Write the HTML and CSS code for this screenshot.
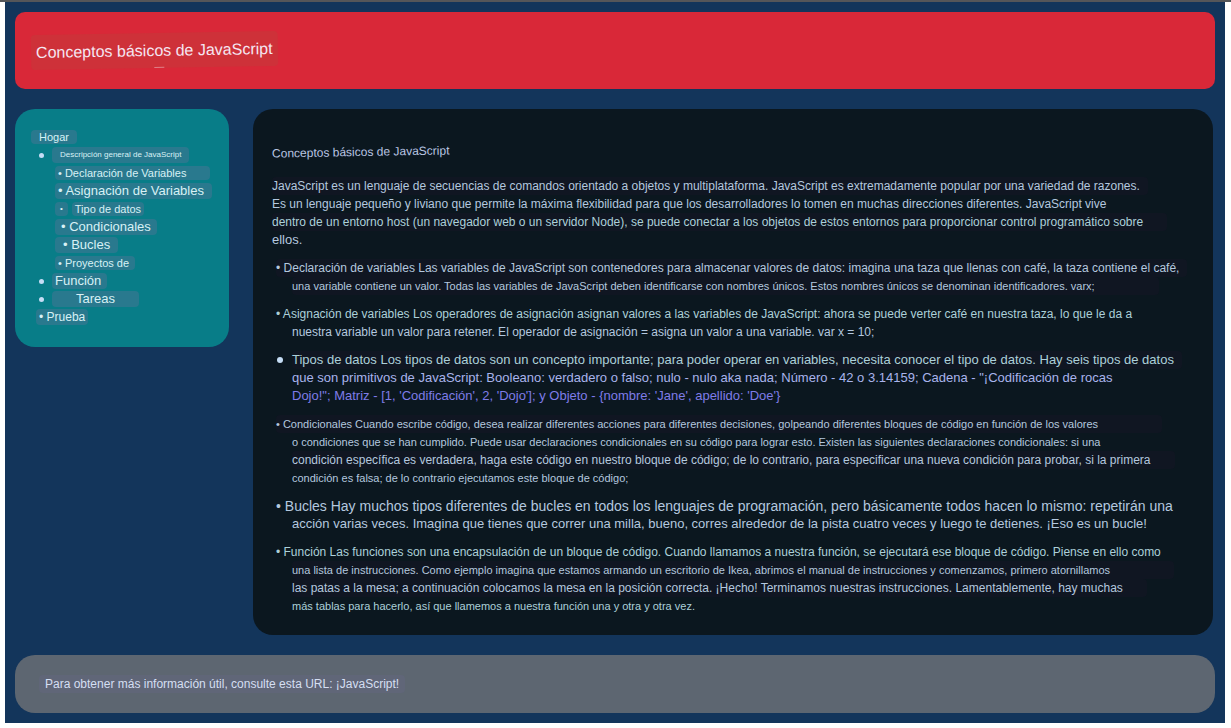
FILE: index.html
```html
<!DOCTYPE html>
<html lang="es">
<head>
<meta charset="utf-8">
<meta name="viewport" content="width=device-width, initial-scale=1">
<title>Conceptos básicos de JavaScript</title>
<link rel="stylesheet" href="styles.css">
</head>
<body>
<div class="page">
  <header class="banner"><h1 class="banner-title">Conceptos básicos de JavaScript</h1></header>
  <div class="columns">
    <nav class="menu" aria-label="Temas">
      <ul class="menu-list">
        <li class="row"><a href="#hogar" class="chip home">Hogar</a></li>
        <li class="row top"><span class="dot"></span><a href="#general" class="chip tall overview">Descripción general de JavaScript</a></li>
        <li>
          <ul class="submenu">
            <li class="row"><a href="#declaracion" class="chip small wide">• Declaración de Variables</a></li>
            <li class="row"><a href="#asignacion" class="chip tall large assign">• Asignación de Variables</a></li>
            <li class="row"><span class="chip mini">•</span><a href="#tipos" class="chip small types">Tipo de datos</a></li>
            <li class="row"><a href="#condicionales" class="chip tall large inset">• Condicionales</a></li>
            <li class="row"><a href="#bucles" class="chip tall large inset-wide">• Bucles</a></li>
            <li class="row"><a href="#proyectos" class="chip small projects">• Proyectos de</a></li>
          </ul>
        </li>
        <li class="row top"><span class="dot"></span><a href="#funcion" class="chip tall large function">Función</a></li>
        <li class="row top"><span class="dot"></span><a href="#tareas" class="chip tall large tasks">Tareas</a></li>
        <li class="row test"><a href="#prueba" class="chip tall medium">• Prueba</a></li>
      </ul>
    </nav>
    <main class="content">
      <h2 class="content-title" id="general">Conceptos básicos de JavaScript</h2>
      <p class="intro">
        <span class="line s12 mark">JavaScript es un lenguaje de secuencias de comandos orientado a objetos y multiplataforma. JavaScript es extremadamente popular por una variedad de razones.</span>
        <span class="line s12">Es un lenguaje pequeño y liviano que permite la máxima flexibilidad para que los desarrolladores lo tomen en muchas direcciones diferentes. JavaScript vive</span>
        <span class="line s12 mark mark-wide aqua">dentro de un entorno host (un navegador web o un servidor Node), se puede conectar a los objetos de estos entornos para proporcionar control programático sobre</span>
        <span class="line s13">ellos.</span>
      </p>
      <ul class="topics">
        <li id="declaracion">
          <span class="line first s12 mark">• Declaración de variables Las variables de JavaScript son contenedores para almacenar valores de datos: imagina una taza que llenas con café, la taza contiene el café,</span>
          <span class="line s11 mark mark-far">una variable contiene un valor. Todas las variables de JavaScript deben identificarse con nombres únicos. Estos nombres únicos se denominan identificadores. varx;</span>
        </li>
        <li id="asignacion">
          <span class="line first s12 aqua">• Asignación de variables Los operadores de asignación asignan valores a las variables de JavaScript: ahora se puede verter café en nuestra taza, lo que le da a</span>
          <span class="line s12">nuestra variable un valor para retener. El operador de asignación = asigna un valor a una variable. var x = 10;</span>
        </li>
        <li id="tipos" class="dotted">
          <span class="line s13 mark aqua">Tipos de datos Los tipos de datos son un concepto importante; para poder operar en variables, necesita conocer el tipo de datos. Hay seis tipos de datos</span>
          <span class="line s13 lilac">que son primitivos de JavaScript: Booleano: verdadero o falso; nulo - nulo aka nada; Número - 42 o 3.14159; Cadena - "¡Codificación de rocas</span>
          <span class="line s13 violet">Dojo!"; Matriz - [1, 'Codificación', 2, 'Dojo']; y Objeto - {nombre: 'Jane', apellido: 'Doe'}</span>
        </li>
        <li id="condicionales">
          <span class="line first s11 mark mark-far">• Condicionales Cuando escribe código, desea realizar diferentes acciones para diferentes decisiones, golpeando diferentes bloques de código en función de los valores</span>
          <span class="line s11">o condiciones que se han cumplido. Puede usar declaraciones condicionales en su código para lograr esto. Existen las siguientes declaraciones condicionales: si una</span>
          <span class="line s12 mark mark-wide">condición específica es verdadera, haga este código en nuestro bloque de código; de lo contrario, para especificar una nueva condición para probar, si la primera</span>
          <span class="line s11">condición es falsa; de lo contrario ejecutamos este bloque de código;</span>
        </li>
        <li id="bucles">
          <span class="line first s14">• Bucles Hay muchos tipos diferentes de bucles en todos los lenguajes de programación, pero básicamente todos hacen lo mismo: repetirán una</span>
          <span class="line s13">acción varias veces. Imagina que tienes que correr una milla, bueno, corres alrededor de la pista cuatro veces y luego te detienes. ¡Eso es un bucle!</span>
        </li>
        <li id="funcion">
          <span class="line first s12 aqua">• Función Las funciones son una encapsulación de un bloque de código. Cuando llamamos a nuestra función, se ejecutará ese bloque de código. Piense en ello como</span>
          <span class="line s11 mark mark-far">una lista de instrucciones. Como ejemplo imagina que estamos armando un escritorio de Ikea, abrimos el manual de instrucciones y comenzamos, primero atornillamos</span>
          <span class="line s12 mark mark-wide">las patas a la mesa; a continuación colocamos la mesa en la posición correcta. ¡Hecho! Terminamos nuestras instrucciones. Lamentablemente, hay muchas</span>
          <span class="line s11 aqua">más tablas para hacerlo, así que llamemos a nuestra función una y otra y otra vez.</span>
        </li>
      </ul>
    </main>
  </div>
  <footer class="footer"><p class="footer-text">Para obtener más información útil, consulte esta URL: ¡JavaScript!</p></footer>
</div>
</body>
</html>
```
FILE: styles.css
```css
* { box-sizing: border-box; }
body {
  margin: 0;
  border-top: 2px solid #555659;
  background: #fff;
  color: #b4c8df;
  font-family: "Liberation Sans", Arial, sans-serif;
  font-size: 12px;
  line-height: 18px;
}
h1, h2, p, ul { margin: 0; padding: 0; font-weight: normal; }
ul { list-style: none; }

.page {
  display: flex;
  flex-direction: column;
  gap: 20px;
  margin: 0 6px 5px 5px;
  padding: 10px;
  background: #13355b;
}

.banner {
  display: flex;
  padding: 21px 16px;
  border-radius: 10px;
  background: #d92838;
}
.banner-title {
  position: relative;
  padding: 0 5px;
  border-radius: 4px;
  background: #ce3139;
  color: #f5e6f2;
  font-size: 16px;
  line-height: 35px;
  transform: rotate(-1deg);
}
.banner-title::after {
  content: "";
  position: absolute;
  bottom: 0;
  left: 50%;
  width: 10px;
  height: 1px;
  background: #e08088;
}

.columns {
  display: grid;
  grid-template-columns: 214px minmax(0, 1fr);
  align-items: start;
  gap: 24px;
  margin-right: 2px;
}

.menu {
  padding: 19px 16px 21px;
  border-radius: 20px;
  background: #087d88;
}
.row {
  display: flex;
  align-items: center;
  height: 18px;
}
.submenu { padding-left: 24px; }
.top { padding-left: 8px; }
.test { padding-left: 5px; }
.dot {
  width: 5px;
  height: 5px;
  margin-right: 8px;
  border-radius: 50%;
  background: #c5ddf5;
}
.chip {
  padding: 0 3px;
  border-radius: 4px;
  background: #29798e;
  color: #d8f1f5;
  font-size: 11px;
  line-height: 14px;
  white-space: nowrap;
  text-decoration: none;
}
.tall { line-height: 16px; }
.medium { font-size: 12px; }
.large { font-size: 13px; }
.home { padding: 0 8px; }
.overview { padding: 0 8px; font-size: 8px; }
.wide { padding-right: 24px; }
.assign { padding-right: 8px; }
.mini { padding: 0 5px; margin-right: 4px; font-size: 8px; }
.inset { padding: 0 6px; }
.inset-wide { padding: 0 8px; }
.projects { padding-right: 6px; }
.function { padding-right: 6px; }
.tasks { padding: 0 24px; }

.content {
  padding: 34px 19px 20px;
  border-radius: 20px;
  background: #0b171f;
  overflow-wrap: anywhere;
}
.content-title {
  width: fit-content;
  margin-bottom: 16px;
  font-size: 12px;
  color: #b9c5e2;
  transform: rotate(-1deg);
}
.line {
  display: block;
  width: fit-content;
}
.topics {
  display: flex;
  flex-direction: column;
  gap: 10px;
  margin-top: 10px;
  padding-left: 20px;
}
.first { margin-left: -16px; }
.dotted { position: relative; }
.dotted::before {
  content: "";
  position: absolute;
  top: 6px;
  left: -15px;
  width: 6px;
  height: 6px;
  border-radius: 50%;
  background: #c5ddf5;
}
.mark {
  padding-right: 8px;
  border-radius: 4px;
  background: #101622;
}
.mark-wide { padding-right: 24px; }
.mark-far { padding-right: 64px; }
.s11 { font-size: 11px; }
.s12 { font-size: 12px; }
.s13 { font-size: 13px; }
.s14 { font-size: 14px; }
.aqua { color: #acd0d9; }
.lilac { color: #a9b4ec; }
.violet { color: #7f7ce8; }

.footer {
  padding: 20px 24px;
  border-radius: 20px;
  background: #5d6671;
}
.footer-text {
  width: fit-content;
  padding: 0 6px;
  border-radius: 4px;
  background: #606678;
  color: #d5dff2;
}
```
